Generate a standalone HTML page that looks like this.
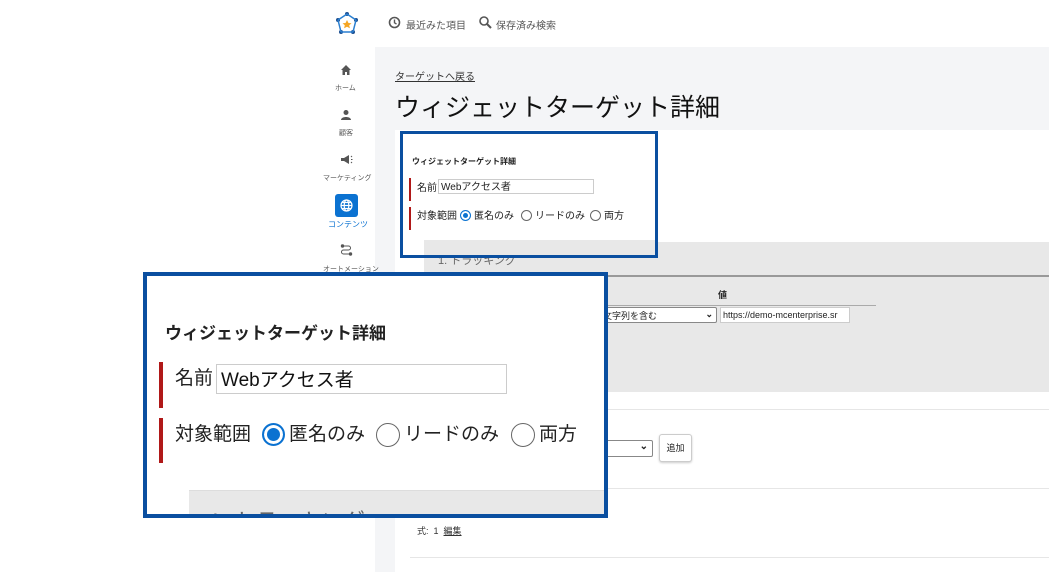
<!DOCTYPE html><html><head><meta charset="utf-8"><style>
*{margin:0;padding:0;box-sizing:border-box}
body{width:1060px;height:572px;background:#fff;position:relative;overflow:hidden;font-family:"Liberation Sans","Noto Sans CJK JP",sans-serif;color:#222}
.a{position:absolute}
.t{font-size:9px;color:#555;white-space:nowrap}
.s{font-size:10px;line-height:13px;color:#222;white-space:nowrap}
.b{font-size:19px;line-height:24px;color:#222;white-space:nowrap}
.radio{position:absolute;border-radius:50%;border:1px solid #666;background:#fff}
.on{border-color:#0b72d1;background:#0b72d1}
</style></head><body>
<div class="a" style="left:318px;top:0;width:731px;height:572px;background:#fff"></div>
<div class="a" style="left:375px;top:47px;width:674px;height:525px;background:#f4f5f7"></div>
<svg class="a" style="left:334px;top:11px" width="26" height="26" viewBox="0 0 26 26"><g fill="#1d4f91"><circle cx="13" cy="3" r="2"/><circle cx="22" cy="9" r="2"/><circle cx="19" cy="21" r="2"/><circle cx="7" cy="21" r="2"/><circle cx="4" cy="9" r="2"/></g><g stroke="#2a7fd0" stroke-width="1.5" fill="none"><path d="M13 3 L22 9 M22 9 L19 21 M19 21 L7 21 M7 21 L4 9 M4 9 L13 3"/></g><path d="M13 9 l1.5 3 3 .3-2.3 2 .7 3-2.9-1.6-2.9 1.6.7-3-2.3-2 3-.3z" fill="#f5a623"/></svg>
<svg class="a" style="left:388px;top:16px" width="13" height="13" viewBox="0 0 13 13"><circle cx="6.5" cy="6.5" r="5" fill="none" stroke="#555" stroke-width="1.6"/><path d="M6.5 3.5v3.3l2 1.3" stroke="#555" stroke-width="1.4" fill="none"/></svg>
<div class="a t" style="left:406px;top:17px;font-size:10px">最近みた項目</div>
<svg class="a" style="left:478px;top:15px" width="14" height="14" viewBox="0 0 14 14"><circle cx="6" cy="6" r="4" fill="none" stroke="#555" stroke-width="1.6"/><path d="M9 9l4 4" stroke="#555" stroke-width="2"/></svg>
<div class="a t" style="left:496px;top:17px;font-size:10px">保存済み検索</div>
<svg class="a" style="left:340px;top:64px" width="12" height="12" viewBox="0 0 12 12"><path d="M6 1L1 6h1.5v5h2.5V8h2v3h2.5V6H11z" fill="#555"/></svg>
<div class="a t" style="left:335px;top:83px;font-size:7px">ホーム</div>
<svg class="a" style="left:340px;top:109px" width="12" height="12" viewBox="0 0 12 12"><circle cx="6" cy="3.5" r="2.5" fill="#555"/><path d="M1 11c0-4 10-4 10 0z" fill="#555"/></svg>
<div class="a t" style="left:339px;top:128px;font-size:7px">顧客</div>
<svg class="a" style="left:340px;top:154px" width="13" height="11" viewBox="0 0 13 11"><path d="M1 4h3l5-3v9L4 7H1z" fill="#555"/><path d="M11 3l1-1M11 8l1 1M11 5.5h1.5" stroke="#555"/></svg>
<div class="a t" style="left:323px;top:173px;font-size:7px">マーケティング</div>
<div class="a" style="left:335px;top:194px;width:23px;height:23px;background:#0b72d1;border-radius:3px"></div>
<svg class="a" style="left:340px;top:199px" width="13" height="13" viewBox="0 0 13 13"><g fill="none" stroke="#fff" stroke-width="1.2"><circle cx="6.5" cy="6.5" r="5.5"/><ellipse cx="6.5" cy="6.5" rx="2.3" ry="5.5"/><path d="M1 6.5h11M2 3.5h9M2 9.5h9"/></g></svg>
<div class="a t" style="left:328px;top:219px;font-size:8px;color:#0b72d1">コンテンツ</div>
<svg class="a" style="left:340px;top:244px" width="13" height="12" viewBox="0 0 13 12"><circle cx="2.5" cy="2" r="1.7" fill="#555"/><circle cx="10.5" cy="10" r="1.7" fill="#555"/><path d="M2.5 2h6a2 2 0 010 4h-5a2 2 0 000 4h7" stroke="#555" fill="none"/></svg>
<div class="a t" style="left:323px;top:264px;font-size:7px">オートメーション</div>
<div class="a" style="left:395px;top:68px;font-size:10px;color:#333;text-decoration:underline">ターゲットへ戻る</div>
<div class="a" style="left:395px;top:88px;font-size:25px;color:#111;white-space:nowrap">ウィジェットターゲット詳細</div>
<div class="a" style="left:395px;top:130px;width:654px;height:442px;background:#fff"></div>
<div class="a" style="left:424px;top:242px;width:625px;height:150px;background:#e8e8e8"></div>
<div class="a" style="left:424px;top:275px;width:625px;height:2px;background:#999"></div>
<div class="a t" style="left:438px;top:252px;font-size:11px;color:#666">1. トラッキング</div>
<div class="a" style="left:718px;top:288px;font-size:9px;font-weight:bold">値</div>
<div class="a" style="left:590px;top:305px;width:286px;height:1px;background:#aaa"></div>
<div class="a" style="left:590px;top:307px;width:127px;height:16px;background:#fff;border:1px solid #888;border-radius:2px;font-size:9px;padding:1px 0 0 12px;white-space:nowrap">文字列を含む<span style="position:absolute;right:3px;font-weight:bold">⌄</span></div>
<div class="a" style="left:720px;top:307px;width:130px;height:16px;background:#fff;border:1px solid #ccc;font-size:9px;padding:2px 2px;white-space:nowrap;overflow:hidden">https://demo-mcenterprise.sr</div>
<div class="a" style="left:410px;top:409px;width:639px;height:1px;background:#e6e6e6"></div>
<div class="a" style="left:590px;top:440px;width:63px;height:17px;background:#fff;border:1px solid #888;border-radius:2px;font-size:10px;text-align:right;padding-right:4px;font-weight:bold">⌄</div>
<div class="a" style="left:659px;top:434px;width:33px;height:28px;background:#fff;border:1px solid #ccc;border-radius:3px;box-shadow:0 1px 2px #ccc;font-size:9px;text-align:center;line-height:26px">追加</div>
<div class="a" style="left:410px;top:488px;width:639px;height:1px;background:#e6e6e6"></div>
<div class="a t" style="left:417px;top:524px;font-size:9px;color:#333">式: &nbsp;1 &nbsp;<u>編集</u></div>
<div class="a" style="left:410px;top:557px;width:639px;height:1px;background:#e6e6e6"></div>
<!-- small box -->
<div class="a" style="left:400px;top:131px;width:258px;height:127px;border:3px solid #0a4fa0;background:#fff"></div>
<div class="a" style="left:424px;top:240px;width:231px;height:15px;background:#e8e8e8"></div>
<div class="a t" style="left:412px;top:156px;font-size:8px;font-weight:bold;color:#222">ウィジェットターゲット詳細</div>
<div class="a" style="left:409px;top:178px;width:2px;height:23px;background:#b01818"></div>
<div class="a" style="left:409px;top:207px;width:2px;height:23px;background:#b01818"></div>
<div class="a s" style="left:417px;top:182px">名前</div>
<div class="a s" style="left:438px;top:179px;width:156px;height:15px;border:1px solid #ccc;padding:1px 2px 0">Webアクセス者</div>
<div class="a s" style="left:417px;top:210px">対象範囲</div>
<span class="radio on" style="left:460px;top:210px;width:11px;height:11px;box-shadow:inset 0 0 0 2px #fff"></span>
<div class="a s" style="left:474px;top:210px">匿名のみ</div>
<span class="radio" style="left:521px;top:210px;width:11px;height:11px"></span>
<div class="a s" style="left:535px;top:210px">リードのみ</div>
<span class="radio" style="left:590px;top:210px;width:11px;height:11px"></span>
<div class="a s" style="left:604px;top:210px">両方</div>
<!-- big box -->
<div class="a" style="left:143px;top:272px;width:465px;height:246px;border:4px solid #0a4fa0;background:#fff;overflow:hidden">
<div class="a" style="left:42px;top:214px;width:420px;height:40px;background:#e8e8e8;border-top:1px solid #ddd"></div>
<div class="a" style="left:62px;top:228px;font-size:22px;color:#666;white-space:nowrap">1. トラッキング</div>
</div>
<div class="a" style="left:165px;top:319px;font-size:17px;font-weight:bold;color:#222;white-space:nowrap">ウィジェットターゲット詳細</div>
<div class="a" style="left:159px;top:362px;width:4px;height:46px;background:#b01818"></div>
<div class="a" style="left:159px;top:418px;width:4px;height:45px;background:#b01818"></div>
<div class="a b" style="left:175px;top:367px">名前</div>
<div class="a b" style="left:216px;top:364px;width:291px;height:30px;border:1px solid #ccc;padding:4px 4px 0;color:#111">Webアクセス者</div>
<div class="a b" style="left:175px;top:423px">対象範囲</div>
<span class="radio on" style="left:262px;top:423px;width:23px;height:23px;border-width:2px;box-shadow:inset 0 0 0 3px #fff"></span>
<div class="a b" style="left:289px;top:423px">匿名のみ</div>
<span class="radio" style="left:376px;top:423px;width:24px;height:24px"></span>
<div class="a b" style="left:404px;top:423px">リードのみ</div>
<span class="radio" style="left:511px;top:423px;width:24px;height:24px"></span>
<div class="a b" style="left:539px;top:423px">両方</div>
</body></html>
